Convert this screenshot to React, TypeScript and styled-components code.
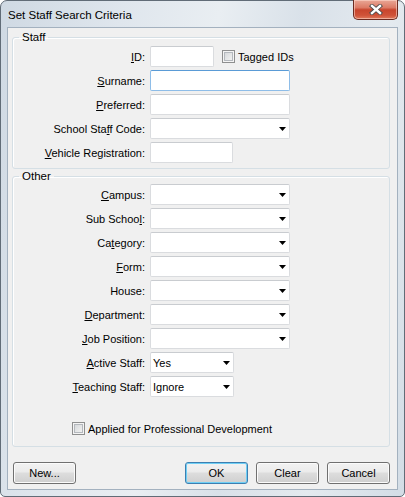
import styled, { createGlobalStyle } from "styled-components"

const GlobalStyle = createGlobalStyle`
    html, body {
        margin: 0;
        padding: 0;
        background: #ffffff;
    }
    body {
        font-family: "Liberation Sans", Arial, sans-serif;
        font-size: 11px;
        color: #000;
    }
`

const Window = styled.div`
    box-sizing: border-box;
    width: 405px;
    height: 497px;
    border: 1px solid #616c77;
    border-radius: 7px 7px 5px 5px;
    background: linear-gradient(100deg, #cfd9e3 0%, #dfe6ed 25%, #e9eef2 45%, #d9e1e9 62%, #e4eaef 80%, #d3dde6 100%);
    display: flex;
    flex-direction: column;
    padding: 0 6px 6px 6px;
`

const TitleBar = styled.div`
    height: 26px;
    display: flex;
    align-items: flex-start;
    flex-shrink: 0;
`

const Title = styled.div`
    padding: 7px 0 0 1px;
    line-height: 14px;
    font-size: 11.5px;
    color: #000;
`

const CloseButton = styled.div`
    box-sizing: border-box;
    margin: -1px 0 0 auto;
    width: 45px;
    height: 20px;
    border: 1px solid #6b2b21;
    border-top: none;
    border-radius: 0 0 5px 5px;
    background: linear-gradient(#e9a796 0%, #dc7b66 40%, #c8452d 52%, #cf5238 80%, #e07a5c 100%);
    box-shadow: inset 0 0 0 1px rgba(255, 220, 210, 0.55);
    display: flex;
    align-items: center;
    justify-content: center;
`

const Client = styled.div`
    flex: 1;
    background: #f0f0f0;
    border: 1px solid #a3b1bf;
    padding: 0 7px 0 4px;
    display: flex;
    flex-direction: column;
`

const Group = styled.fieldset<{ $top?: number; $bottom?: number }>`
    margin: ${(p) => p.$top ?? 0}px 0 0 0;
    padding: 0 0 ${(p) => p.$bottom ?? 5}px 0;
    min-width: 0;
    border: 1px solid #d5dfe5;
    border-radius: 3px;
    box-shadow: inset 1px 1px 0 #ffffff;
`

const Legend = styled.legend`
    margin-left: 6px;
    padding: 0 3px;
    line-height: 14px;
    font-size: 11.5px;
    color: #000;
`

const Rows = styled.div<{ $pad: number }>`
    padding-top: ${(p) => p.$pad}px;
    display: flex;
    flex-direction: column;
    gap: 3px;
`

const Row = styled.div`
    display: flex;
    align-items: center;
    height: 21px;
`

const Label = styled.label`
    width: 132px;
    margin-right: 5px;
    text-align: right;
    white-space: nowrap;
    font-size: 11px;
`

const TextBox = styled.div<{ $w: number; $focus?: boolean }>`
    box-sizing: border-box;
    width: ${(p) => p.$w}px;
    height: 21px;
    background: #ffffff;
    border: 1px solid ${(p) => (p.$focus ? "#8ebde8" : "#dadcdf")};
    border-top-color: ${(p) => (p.$focus ? "#5a9bd6" : "#c9ccd0")};
    border-radius: 2px;
`

const Combo = styled.div<{ $w: number }>`
    box-sizing: border-box;
    width: ${(p) => p.$w}px;
    height: 21px;
    background: #ffffff;
    border: 1px solid #dadcdf;
    border-top-color: #c9ccd0;
    border-radius: 2px;
    display: flex;
    align-items: center;
    padding: 0 3px 0 2px;
    font-size: 11px;
`

const ComboText = styled.span`
    flex: 1;
`

const CheckBox = styled.span`
    box-sizing: border-box;
    display: inline-block;
    width: 13px;
    height: 13px;
    border: 1px solid #8e8f8f;
    background: linear-gradient(135deg, #cfd2d6 0%, #eceded 70%, #f7f7f7 100%);
    box-shadow: inset 0 0 0 1px #f4f4f4, inset 0 0 0 2px #b4b8bd;
`

const CheckLabel = styled.label<{ $left: number }>`
    display: flex;
    align-items: center;
    gap: 3px;
    margin-left: ${(p) => p.$left}px;
    font-size: 11px;
`

const CheckRow = styled(Row)`
    margin-top: 21px;
    padding-left: 59px;
`

const ButtonBar = styled.div`
    display: flex;
    gap: 8px;
    margin-top: 15px;
    padding-left: 1px;
`

const Button = styled.button<{ $default?: boolean; $push?: boolean }>`
    box-sizing: border-box;
    width: 63px;
    height: 22px;
    margin-left: ${(p) => (p.$push ? "auto" : "0")};
    padding: 0;
    font-family: "Liberation Sans", Arial, sans-serif;
    font-size: 11px;
    color: #000;
    border: 1px solid ${(p) => (p.$default ? "#3c7fb1" : "#707070")};
    border-radius: 3px;
    background: linear-gradient(#f2f2f2 0%, #ebebeb 45%, #dddddd 50%, #cfcfcf 100%);
    box-shadow: inset 0 0 0 1px ${(p) => (p.$default ? "#6fcff5" : "#fbfbfb")};
`

const CloseGlyph = () => (
    <svg width="14" height="11" viewBox="0 0 14 11">
        <path d="M3 2 L11 9 M11 2 L3 9" stroke="#4a4a4a" strokeWidth="4.2" strokeLinecap="square" />
        <path d="M3 2 L11 9 M11 2 L3 9" stroke="#ffffff" strokeWidth="2.4" strokeLinecap="square" />
    </svg>
)

const Arrow = () => (
    <svg width="7" height="4" viewBox="0 0 7 4">
        <polygon points="0,0 7,0 3.5,4" fill="#000" />
    </svg>
)

const fieldRow = (label: React.ReactNode, control: React.ReactNode) => (
    <Row>
        <Label>{label}</Label>
        {control}
    </Row>
)

const ComboBox = ({ w, value }: { w: number; value?: string }) => (
    <Combo $w={w}>
        <ComboText>{value}</ComboText>
        <Arrow />
    </Combo>
)

export default function App() {
    return (
        <>
            <GlobalStyle />
            <Window>
                <TitleBar>
                    <Title>Set Staff Search Criteria</Title>
                    <CloseButton>
                        <CloseGlyph />
                    </CloseButton>
                </TitleBar>

                <Client>
                    <Group $top={2}>
                        <Legend>Staff</Legend>
                        <Rows $pad={2}>
                            <Row>
                                <Label><u>I</u>D:</Label>
                                <TextBox $w={64} />
                                <CheckLabel $left={8}>
                                    <CheckBox />
                                    Tagged IDs
                                </CheckLabel>
                            </Row>
                            {fieldRow(<><u>S</u>urname:</>, <TextBox $w={140} $focus />)}
                            {fieldRow(<><u>P</u>referred:</>, <TextBox $w={140} />)}
                            {fieldRow(<>School Sta<u>f</u>f Code:</>, <ComboBox w={140} />)}
                            {fieldRow(<><u>V</u>ehicle Registration:</>, <TextBox $w={83} />)}
                        </Rows>
                    </Group>

                    <Group $bottom={7}>
                        <Legend>Other</Legend>
                        <Rows $pad={1}>
                            {fieldRow(<><u>C</u>ampus:</>, <ComboBox w={140} />)}
                            {fieldRow(<>Sub Schoo<u>l</u>:</>, <ComboBox w={140} />)}
                            {fieldRow(<>Ca<u>t</u>egory:</>, <ComboBox w={140} />)}
                            {fieldRow(<><u>F</u>orm:</>, <ComboBox w={140} />)}
                            {fieldRow(<>House:</>, <ComboBox w={140} />)}
                            {fieldRow(<><u>D</u>epartment:</>, <ComboBox w={140} />)}
                            {fieldRow(<><u>J</u>ob Position:</>, <ComboBox w={140} />)}
                            {fieldRow(<><u>A</u>ctive Staff:</>, <ComboBox w={84} value="Yes" />)}
                            {fieldRow(<><u>T</u>eaching Staff:</>, <ComboBox w={84} value="Ignore" />)}
                        </Rows>
                        <CheckRow>
                            <CheckLabel $left={0}>
                                <CheckBox />
                                Applied for Professional Development
                            </CheckLabel>
                        </CheckRow>
                    </Group>

                    <ButtonBar>
                        <Button>New...</Button>
                        <Button $default $push>OK</Button>
                        <Button>Clear</Button>
                        <Button>Cancel</Button>
                    </ButtonBar>
                </Client>
            </Window>
        </>
    )
}
